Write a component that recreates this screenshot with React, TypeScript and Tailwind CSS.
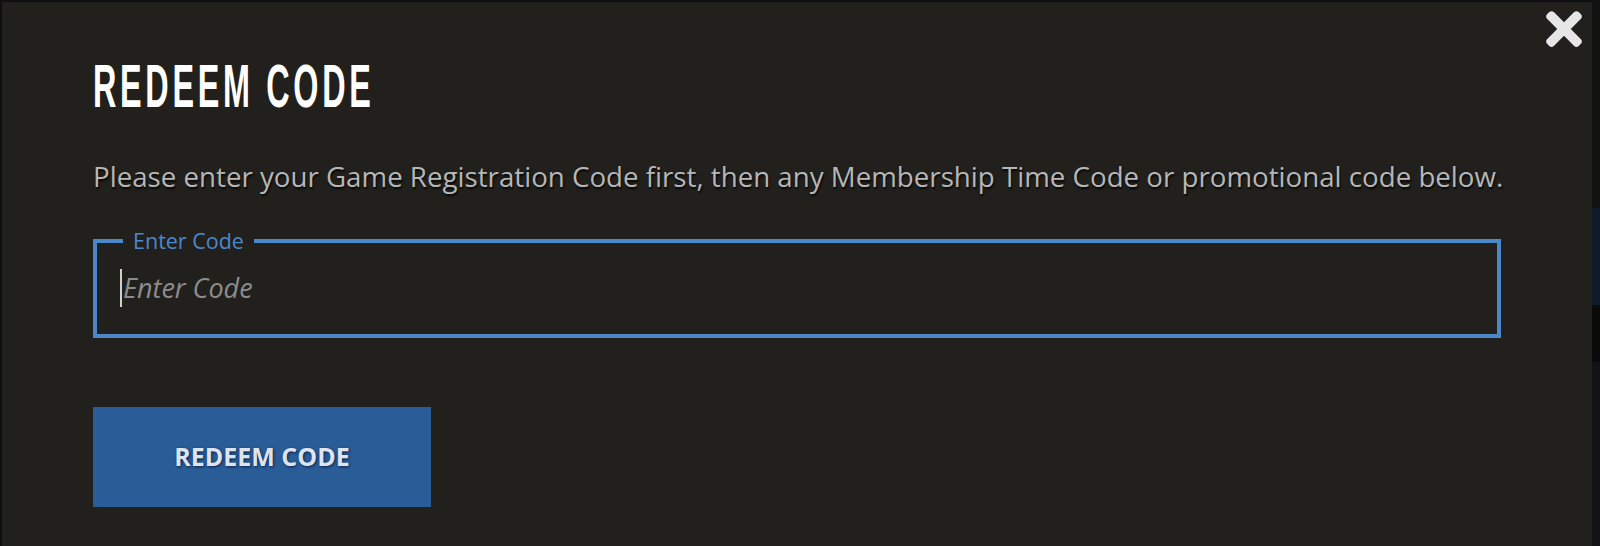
import { FaTimes } from "react-icons/fa";

export default function App() {
  return (
    <div className="h-[546px] w-[1600px] overflow-hidden bg-[#0e0f10] flex">
      <div className="relative mt-[2px] ml-[2px] w-[1590px] h-[544px] bg-[#21201d] pl-[91px] pr-[91px] pt-[54px] font-['Open_Sans',sans-serif]">
        <button className="absolute top-[1px] right-[10px] text-[#e6e6e6]">
          <FaTimes className="w-[36px] h-[52px]" />
        </button>

        <h1 className="origin-left scale-x-[0.53] text-[61px] leading-[61px] font-bold tracking-[7px] text-white font-['Liberation_Sans',sans-serif] whitespace-nowrap">
          REDEEM CODE
        </h1>

        <p className="mt-[40px] text-[27.7px] leading-[38px] text-[#b6b6b6] [text-shadow:1px_2px_2px_rgba(0,0,0,0.8)] whitespace-nowrap">
          Please enter your Game Registration Code first, then any Membership Time Code or promotional code below.
        </p>

        <fieldset className="mt-[35px] w-[1408px] h-[108px] border-[4px] border-[#4b88ca] pl-[23px] pr-[20px] pt-0 pb-[9px]">
          <legend className="px-[10px] ml-[3px] text-[21.5px] leading-[21px] text-[#4b88ca]">Enter Code</legend>
          <div className="flex items-center h-full">
            <span className="w-[2px] h-[38px] bg-[#d0d0d0]" />
            <input
              className="flex-1 bg-transparent outline-none text-[27px] italic text-[#d0d0d0] placeholder:text-[#8c8c8c] ml-[1px]"
              placeholder="Enter Code"
            />
          </div>
        </fieldset>

        <button className="mt-[69px] w-[338px] h-[100px] bg-[#2a5d98] text-[25px] font-bold text-[#dde4ee] [text-shadow:1px_1px_3px_rgba(0,20,60,0.8)]">
          REDEEM CODE
        </button>
      </div>
      <div className="flex-1 flex flex-col">
        <div className="h-[208px] bg-[#121213]" />
        <div className="h-[97px] bg-[#0f1a2b]" />
        <div className="h-[57px] bg-[#0a0a0b]" />
        <div className="flex-1 bg-[#121315]" />
      </div>
    </div>
  );
}
